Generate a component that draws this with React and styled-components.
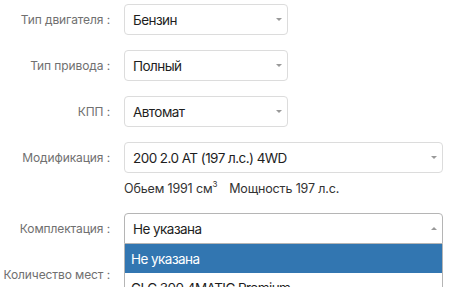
import styled, { createGlobalStyle } from 'styled-components';

const Global = createGlobalStyle`
  body {
    margin: 0;
    background: #fff;
    font-family: Inter, "Noto Sans", sans-serif;
  }
`

const fields = [
  { label: 'Тип двигателя :', value: 'Бензин', wide: false },
  { label: 'Тип привода :', value: 'Полный', wide: false },
  { label: 'КПП :', value: 'Автомат', wide: false },
  { label: 'Модификация :', value: '200 2.0 AT (197 л.с.) 4WD', wide: true },
]

const options = ['Не указана', 'GLC 300 4MATIC Premium', 'GLC 300 4MATIC Sport']

function Select({ value, wide, open }) {
  return (
    <SelectBox $wide={wide} $open={open}>
      <span>{value}</span>
      <Arrow $up={open} />
      {open && (
        <Dropdown>
          {options.map((o, i) => (
            <Option key={o} $active={i === 0}>{o}</Option>
          ))}
        </Dropdown>
      )}
    </SelectBox>
  )
}

export default function App() {
  return (
    <Form>
      <Global />
      {fields.map(f => (
        <Row key={f.label}>
          <Label>{f.label}</Label>
          <Select value={f.value} wide={f.wide} />
        </Row>
      ))}
      <Info>
        <span>Обьем 1991 см<sup>3</sup></span>
        <span>Мощность 197 л.с.</span>
      </Info>
      <Row>
        <Label>Комплектация :</Label>
        <Select value="Не указана" wide open />
      </Row>
      <Row>
        <Label>Количество мест :</Label>
      </Row>
    </Form>
  )
}

const Form = styled.div`
  padding-top: 4px;
  display: flex;
  flex-direction: column;
  overflow: hidden;
  height: 283px;
`

const Row = styled.div`
  display: flex;
  align-items: center;
  gap: 14px;
  height: 31px;
  margin-bottom: 15px;
  flex-shrink: 0;
`

const Label = styled.div`
  width: 110px;
  flex-shrink: 0;
  text-align: right;
  white-space: nowrap;
  font-size: 12px;
  letter-spacing: -0.1px;
  color: #707070;
`

const SelectBox = styled.div`
  position: relative;
  box-sizing: border-box;
  width: ${p => (p.$wide ? '319px' : '164px')};
  height: 31px;
  border: 1px solid ${p => (p.$open ? '#b5b5b5' : '#dcdcdc')};
  border-radius: ${p => (p.$open ? '4px 4px 0 0' : '4px')};
  display: flex;
  align-items: center;
  padding: 0 5px 0 8px;
  font-size: 13.5px;
  letter-spacing: -0.55px;
  color: #1e1e1e;
  background: #fff;

  > span {
    flex: 1;
  }
`

const Arrow = styled.div`
  width: 0;
  height: 0;
  border-left: 3.5px solid transparent;
  border-right: 3.5px solid transparent;
  ${p => (p.$up ? 'border-bottom: 3.5px solid #999;' : 'border-top: 3.5px solid #999;')}
`

const Info = styled.div`
  display: flex;
  gap: 12px;
  margin: -10px 0 15px 124px;
  font-size: 12.5px;
  letter-spacing: -0.15px;
  color: #333;
  height: 20px;
  align-items: center;
  flex-shrink: 0;

  sup {
    font-size: 8px;
    vertical-align: 6px;
    line-height: 0;
  }
`

const Dropdown = styled.div`
  position: absolute;
  top: 30px;
  left: -1px;
  right: -1px;
  background: #fff;
  border: 1px solid #b5b5b5;
  border-top: none;
  z-index: 2;
`

const Option = styled.div`
  height: 29px;
  display: flex;
  align-items: center;
  padding: 0 6px;
  font-size: 13.5px;
  letter-spacing: -0.55px;
  background: ${p => (p.$active ? '#3276b1' : '#fff')};
  color: ${p => (p.$active ? '#fff' : '#1e1e1e')};
`
